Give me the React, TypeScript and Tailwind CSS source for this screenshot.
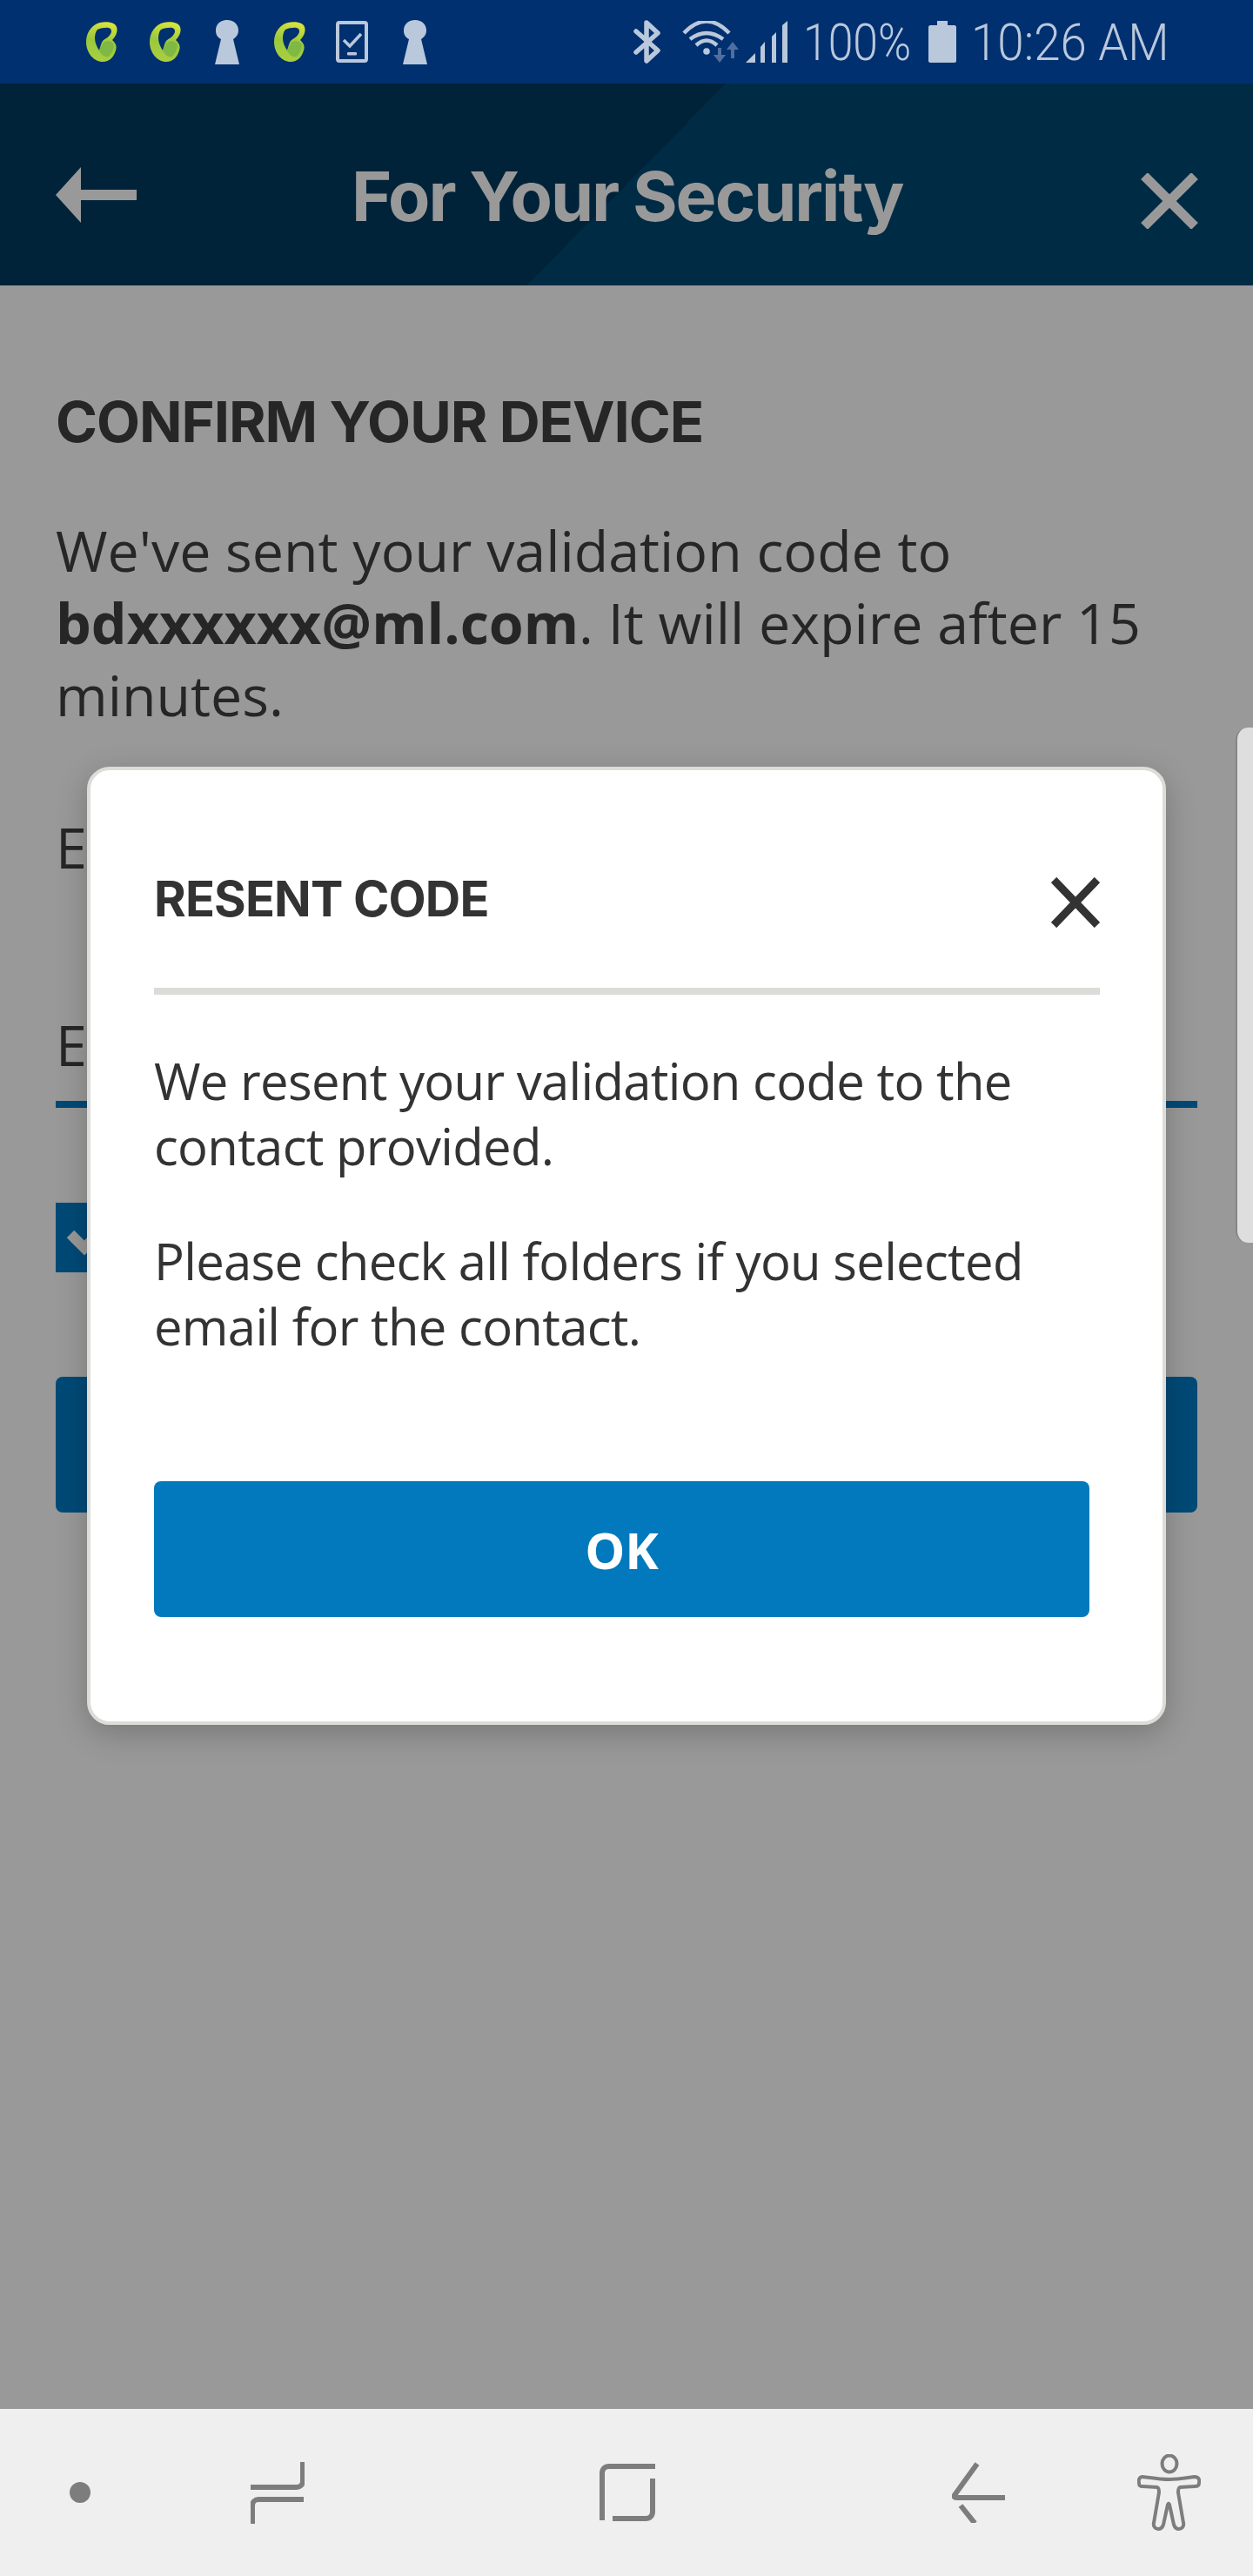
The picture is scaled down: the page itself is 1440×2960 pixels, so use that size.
const Leaf = () => (
  <svg width="36" height="46" viewBox="0 0 36 46" className="shrink-0">
    <defs>
      <linearGradient id="leafGrad" x1="0.65" y1="0" x2="0.45" y2="1">
        <stop offset="0" stopColor="#dbe43a" />
        <stop offset="0.5" stopColor="#9ac83e" />
        <stop offset="1" stopColor="#a9cf3f" />
      </linearGradient>
    </defs>
    <path
      d="M16 1C22 -0.5 33 0 35 6C37 12 33 18 30 21C33 24 36 27 34 33C32 40 27 46 19 46C9 46 0 36 0 23C0 12 7 3 16 1Z"
      fill="url(#leafGrad)"
    />
    <path d="M13 9C17 7 23 6.5 26 7C29 8 30 11 28 14C26 18 22 19 19 22C17 25 16 30 15 33C12 28 10 24 10 19C10 15 11 11 13 9Z" fill="#00306f" />
    <path d="M20 24C24 21 29 22 31 25C33 29 30 36 26 40C22 41 18 39 15 33C16 30 18 27 20 24Z" fill="#7fb842" />
  </svg>
);

const Keyhole = () => (
  <svg width="28" height="51" viewBox="0 0 28 51" className="shrink-0">
    <path d="M14 0C22 0 27 5 27 12C27 17 24 20 21 22L28 51H0L7 22C3 20 1 17 1 12C1 5 6 0 14 0Z" fill="#bac8dc" />
  </svg>
);

const PhoneCheck = () => (
  <svg width="37" height="48" viewBox="0 0 37 48" fill="none" className="shrink-0">
    <rect x="2" y="2" width="33" height="44" rx="2" stroke="#bac8dc" strokeWidth="4" />
    <path d="M9 22L16 29L29 15" stroke="#bac8dc" strokeWidth="3.5" />
    <rect x="13" y="36" width="11" height="3.5" rx="1" fill="#bac8dc" />
  </svg>
);

const Bluetooth = () => (
  <svg width="32" height="50" viewBox="0 0 32 50" fill="none" className="shrink-0">
    <path d="M3 13L28 35L15 47V3L28 15L3 37" stroke="#bac8dc" strokeWidth="5.5" strokeLinejoin="round" strokeLinecap="round" />
  </svg>
);

const WifiData = () => (
  <svg width="67" height="48" viewBox="0 0 67 48" fill="none" className="shrink-0">
    <path d="M3 14Q29 -13 55 14" stroke="#bac8dc" strokeWidth="4.5" />
    <path d="M10 21Q29 7 48 21" stroke="#bac8dc" strokeWidth="4.5" />
    <path d="M17 28Q29 17 41 28" stroke="#bac8dc" strokeWidth="4.5" />
    <circle cx="29" cy="35" r="3.8" fill="#bac8dc" />
    <path d="M44 31V42" stroke="#4f6f9f" strokeWidth="4" />
    <path d="M37 39H51L44 48Z" fill="#4f6f9f" />
    <path d="M59 43V32" stroke="#4f6f9f" strokeWidth="4" />
    <path d="M52 33H66L59 24Z" fill="#4f6f9f" />
  </svg>
);

const Signal = () => (
  <svg width="48" height="48" viewBox="0 0 48 48" className="shrink-0">
    <path d="M0 48L11 37V48Z" fill="#bac8dc" />
    <path d="M17 30L22 24V48H17Z" fill="#bac8dc" />
    <path d="M30 18L35 13V48H30Z" fill="#bac8dc" />
    <path d="M42 5L48 0V48H42Z" fill="#bac8dc" />
  </svg>
);

const Battery = () => (
  <svg width="32" height="48" viewBox="0 0 32 48" className="shrink-0">
    <path d="M10 0H22V5H30C31 5 32 6 32 7V46C32 47 31 48 30 48H2C1 48 0 47 0 46V7C0 6 1 5 2 5H10Z" fill="#bac8dc" />
  </svg>
);

const StatusBar = () => (
  <div className="flex h-[96px] shrink-0 items-center bg-[#00306f] pl-[99px] font-['Roboto',sans-serif] text-[#bac8dc]">
    <Leaf />
    <div className="ml-[37px]"><Leaf /></div>
    <div className="ml-[39px]"><Keyhole /></div>
    <div className="ml-[40px]"><Leaf /></div>
    <div className="ml-[35px]"><PhoneCheck /></div>
    <div className="ml-[40px]"><Keyhole /></div>
    <div className="ml-[237px] flex items-center">
      <Bluetooth />
      <div className="ml-[23px]"><WifiData /></div>
      <div className="ml-[7px]"><Signal /></div>
      <span className="ml-[18px] w-[122px] origin-left scale-x-[0.875] whitespace-nowrap text-[59px] leading-none font-light">100%</span>
      <div className="ml-[22px]"><Battery /></div>
      <span className="ml-[17px] w-[223px] origin-left scale-x-[0.927] whitespace-nowrap text-[59px] leading-none font-light">10:26 AM</span>
    </div>
  </div>
);

const TopBar = () => (
  <div className="flex h-[232px] shrink-0 items-center bg-[linear-gradient(134.6deg,#00233a_0%,#00233a_50%,#002b45_50%,#002b45_100%)] pl-[64px] pr-[63px]">
    <svg width="93" height="64" viewBox="0 0 93 64" className="mt-[24px] shrink-0">
      <path d="M29 0V26H93V38H29V64L0 32Z" fill="#999999" />
    </svg>
    <h1 className="ml-[247px] mt-[26px] whitespace-nowrap font-['Inter',sans-serif] text-[79px] leading-none font-bold tracking-[-0.0255em] text-[#999999]">
      For Your Security
    </h1>
    <svg width="66" height="64" viewBox="0 0 66 64" fill="none" className="ml-auto mt-[38px] shrink-0">
      <path d="M4 3L62 61M62 3L4 61" stroke="#999999" strokeWidth="11" />
    </svg>
  </div>
);

const Background = () => (
  <div className="flex-1 bg-[#999999] px-[64px] pt-[126px] font-['Open_Sans',sans-serif] text-[#262626]">
    <h2 className="font-['Inter',sans-serif] text-[65px] leading-[62px] font-bold tracking-[-0.016em]">CONFIRM YOUR DEVICE</h2>
    <p className="mt-[75px] w-[1310px] text-[64.5px] leading-[83px]">
      We've sent your validation code to <b className="font-bold">bdxxxxxx@ml.com</b>. It will expire after 15 minutes.
    </p>
    <div className="mt-[92px] text-[64.5px] leading-[83px]">E</div>
    <div className="mt-[144px] border-b-[8px] border-[#004a76] pb-[23px] text-[64.5px] leading-[83px]">E</div>
    <div className="mt-[109px] h-[80px] w-[80px] bg-[#004a76]">
      <svg width="80" height="80" viewBox="0 0 80 80" fill="none">
        <path d="M17 36L33 52L70 14" stroke="#999999" strokeWidth="12" />
      </svg>
    </div>
    <div className="mt-[120px] h-[156px] rounded-[8px] bg-[#004a76]" />
  </div>
);

const NavBar = () => (
  <div className="flex h-[192px] shrink-0 items-center bg-[#efefef] pl-[80px]">
    <div className="h-[24px] w-[24px] rounded-full bg-[#7d7d7d]" />
    <svg width="62" height="71" viewBox="0 0 62 71" fill="none" className="ml-[184px]">
      <path d="M60 0V22C60 26 57 29 53 29H0" stroke="#7d7d7d" strokeWidth="6" />
      <path d="M2 71V50C2 46 5 43 9 43H61" stroke="#7d7d7d" strokeWidth="6" />
    </svg>
    <svg width="64" height="66" viewBox="0 0 64 66" fill="none" className="ml-[339px]">
      <path d="M3 65V11C3 6 6 3 11 3H64" stroke="#7d7d7d" strokeWidth="6" />
      <path d="M15 63H53C58 63 61 60 61 55V17" stroke="#7d7d7d" strokeWidth="6" />
    </svg>
    <svg width="61" height="70" viewBox="0 0 61 70" fill="none" className="ml-[341px]">
      <path d="M29 2L3 38C2 40 3 41 5 41H61" stroke="#7d7d7d" strokeWidth="6" />
      <path d="M10 50L29 68" stroke="#7d7d7d" strokeWidth="6" transform="rotate(8 10 50)" />
    </svg>
    <svg width="73" height="88" viewBox="0 0 73 88" fill="none" className="ml-[152px]">
      <ellipse cx="37" cy="11" rx="8.5" ry="9.5" stroke="#7d7d7d" strokeWidth="4" />
      <path
        d="M6 26C14 27 28 29 37 29C46 29 58 27 66 26C70 26 72 29 71 33C71 36 69 37 66 37L49 38C47 39 47 42 47 44L53 79C54 83 51 86 48 86C45 86 43 84 42 81L37 58C36 56 36 56 35 58L30 81C29 84 27 86 24 86C21 86 18 83 19 79L25 44C25 42 25 39 23 38L6 37C3 37 2 36 2 33C1 29 3 26 6 26Z"
        stroke="#7d7d7d"
        strokeWidth="4"
        strokeLinejoin="round"
      />
    </svg>
  </div>
);

const ResentModal = () => (
  <div className="absolute left-[100px] top-[881px] h-[1101px] w-[1240px] rounded-[26px] border-[4px] border-[#dcdcd8] bg-white pl-[73px] pr-[72px] shadow-[0_10px_36px_rgba(0,0,0,0.22)]">
    <div className="flex h-[258px] items-center justify-between border-b-[8px] border-[#dbdbd8] pt-[46px]">
      <h3 className="font-['Inter',sans-serif] text-[56px] leading-none font-bold tracking-[-0.015em] text-[#333333]">RESENT CODE</h3>
      <svg width="56" height="58" viewBox="0 0 56 58" fill="none" className="mt-[8px]">
        <path d="M3 3L53 55M53 3L3 55" stroke="#333333" strokeWidth="9" />
      </svg>
    </div>
    <div className="pt-[61px] font-['Open_Sans',sans-serif] text-[58px] leading-[75px] tracking-[-0.7px] text-[#333333]">
      <p>We resent your validation code to the contact provided.</p>
      <p className="mt-[57px]">Please check all folders if you selected email for the contact.</p>
    </div>
    <button className="mt-[141px] flex h-[156px] w-[1075px] items-center justify-center rounded-[8px] bg-[#0279bd] font-['Open_Sans',sans-serif] text-[58px] font-bold text-white">
      OK
    </button>
  </div>
);

export default function App() {
  return (
    <div className="relative flex h-[2960px] w-[1440px] flex-col overflow-hidden">
      <StatusBar />
      <TopBar />
      <Background />
      <NavBar />
      {/* edge panel handle */}
      <div className="absolute right-0 top-[836px] h-[592px] w-[20px] rounded-l-[14px] border-l-[2px] border-[#868686] bg-[#dedede]" />
      <ResentModal />
    </div>
  );
}
